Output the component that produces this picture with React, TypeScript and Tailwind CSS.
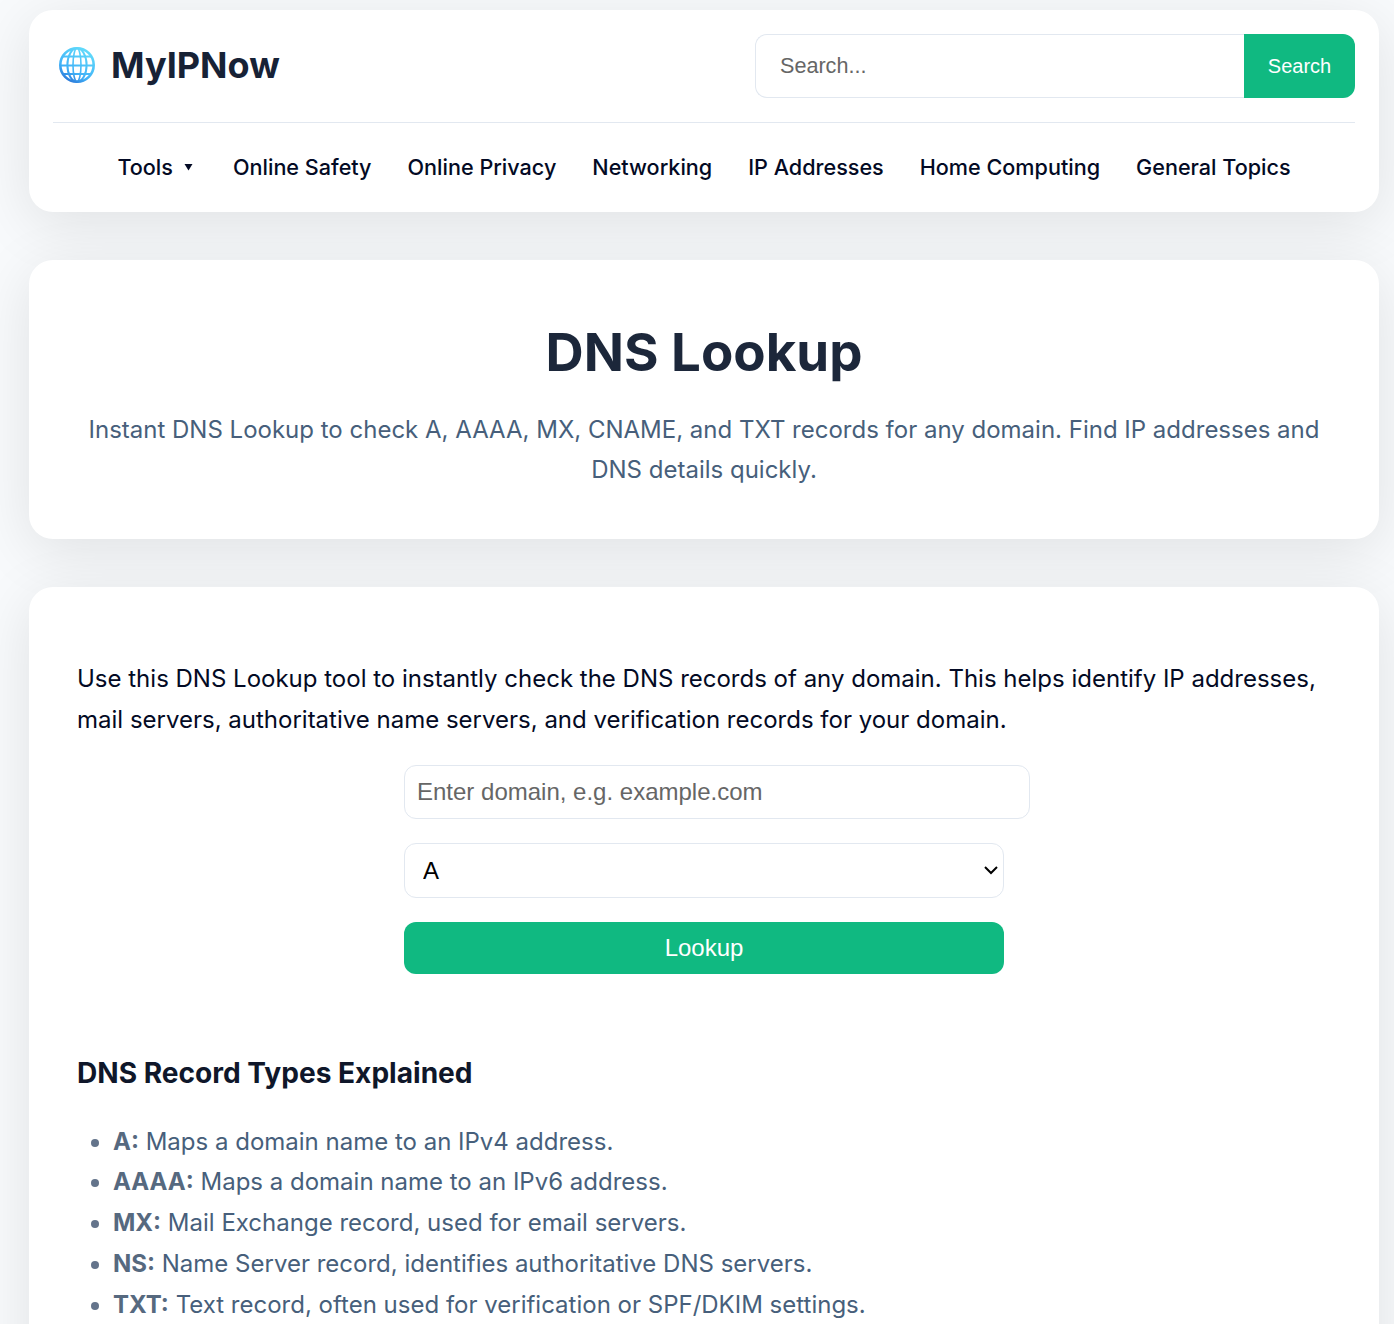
import { useState } from 'react';

const navItems = [
  'Online Safety',
  'Online Privacy',
  'Networking',
  'IP Addresses',
  'Home Computing',
  'General Topics',
];

const recordTypes = [
  { name: 'A', text: 'Maps a domain name to an IPv4 address.' },
  { name: 'AAAA', text: 'Maps a domain name to an IPv6 address.' },
  { name: 'MX', text: 'Mail Exchange record, used for email servers.' },
  { name: 'NS', text: 'Name Server record, identifies authoritative DNS servers.' },
  { name: 'TXT', text: 'Text record, often used for verification or SPF/DKIM settings.' },
];

function GlobeIcon() {
  return (
    <svg className="w-9 h-9" viewBox="0 0 36 36" fill="none">
      <defs>
        <linearGradient id="globe" x1="26" y1="1" x2="7" y2="34" gradientUnits="userSpaceOnUse">
          <stop stopColor="#62dcfb" />
          <stop offset="0.7" stopColor="#3fb0f7" />
          <stop offset="1" stopColor="#2a74d6" />
        </linearGradient>
      </defs>
      <g stroke="url(#globe)" strokeWidth="2">
        <circle cx="18" cy="18" r="16.7" strokeWidth="2.6" />
        <ellipse cx="18" cy="18" rx="9.6" ry="16.7" />
        <ellipse cx="18" cy="18" rx="4" ry="16.7" strokeWidth="1.6" />
        <path d="M1 18.5L35 18.51M4 9.5L32 9.51M4 27L32 27.01" />
      </g>
    </svg>
  );
}

export default function App() {
  const [domain, setDomain] = useState('');
  const [type, setType] = useState('A');

  return (
    <div className="h-[1324px] overflow-hidden bg-[#f8fafc] pl-[29px] pr-[15px] pt-[10px] font-['Inter',sans-serif] text-2xl leading-[1.7] text-[#030a24]">
      {/* Header */}
      <header className="h-[202px] rounded-3xl bg-white px-6 pt-6 shadow-[0_12px_60px_rgba(0,0,0,0.1)]">
        <div className="flex h-[89px] items-start justify-between border-b border-[#e2e8f0]">
          <a href="#" className="flex h-[62px] items-center gap-4 pl-1.5 text-4xl font-bold text-[#172236]">
            <GlobeIcon />
            <span>MyIPNow</span>
          </a>
          <form className="flex h-16 w-[600px]" onSubmit={(e) => e.preventDefault()}>
            <input
              type="text"
              placeholder="Search..."
              className="min-w-0 flex-1 rounded-l-xl border border-r-0 border-[#e2e8f0] px-6 font-['Liberation_Sans',sans-serif] text-[21.6px] leading-none outline-none placeholder:text-[#666666]"
            />
            <button className="w-[111px] rounded-r-xl bg-[#10b981] font-['Liberation_Sans',sans-serif] text-[20px] leading-none text-white">
              Search
            </button>
          </form>
        </div>

        <nav className="flex h-[89px] items-center justify-center gap-9 text-[21.6px] font-medium">
          <a href="#" className="mr-1 flex items-center gap-[11px]">
            Tools
            <svg className="w-[9px] h-2" viewBox="0 0 9 8">
              <path d="M0.5 1H8.5L4.5 7.5Z" fill="currentColor" />
            </svg>
          </a>
          {navItems.map((item) => (
            <a key={item} href="#">{item}</a>
          ))}
        </nav>
      </header>

      {/* Page title */}
      <section className="mt-12 h-[279px] rounded-3xl bg-white px-12 pt-[47px] text-center shadow-[0_12px_60px_rgba(0,0,0,0.1)]">
        <h1 className="text-[52.8px] font-bold leading-[90px] text-[#1c273a]">DNS Lookup</h1>
        <p className="mt-[12.5px] text-[#475f7b]">
          Instant DNS Lookup to check A, AAAA, MX, CNAME, and TXT records for any domain. Find IP addresses and DNS
          details quickly.
        </p>
      </section>

      {/* Lookup tool */}
      <main className="mt-12 h-[900px] rounded-3xl bg-white px-12 pt-[72px] shadow-[0_12px_60px_rgba(0,0,0,0.1)]">
        <p>
          Use this DNS Lookup tool to instantly check the DNS records of any domain. This helps identify IP addresses,
          mail servers, authoritative name servers, and verification records for your domain.
        </p>
        <form
          className="mx-auto mt-6 flex w-[600px] flex-col gap-6 font-['Liberation_Sans',sans-serif] leading-none"
          onSubmit={(e) => e.preventDefault()}
        >
          <input
            type="text"
            value={domain}
            onChange={(e) => setDomain(e.target.value)}
            placeholder="Enter domain, e.g. example.com"
            className="h-[54px] w-[626px] rounded-xl border border-[#e2e8f0] px-3 outline-none placeholder:text-[#666666]"
          />
          <div className="grid">
            <select
              value={type}
              onChange={(e) => setType(e.target.value)}
              className="col-start-1 row-start-1 h-[55px] w-full appearance-none rounded-xl border border-[#e2e8f0] bg-white px-[18px] pt-0.5 text-black outline-none"
            >
              {['A', 'AAAA', 'MX', 'NS', 'TXT', 'CNAME'].map((t) => (
                <option key={t}>{t}</option>
              ))}
            </select>
            <svg
              className="pointer-events-none col-start-1 row-start-1 mr-[5px] h-4 w-4 self-center justify-self-end"
              viewBox="0 0 16 16"
              fill="none"
            >
              <path d="M2 5L8 11L14 5" stroke="#000" strokeWidth="2" />
            </svg>
          </div>
          <button className="h-[52px] rounded-xl bg-[#10b981] text-white">Lookup</button>
        </form>

        <h3 className="mt-[75px] text-[28.08px] font-bold leading-[48px] text-[#0f172a]">DNS Record Types Explained</h3>
        <ul className="mt-[25px] list-disc pl-9 text-[#475f7b] marker:text-[#64748b]">
          {recordTypes.map((record) => (
            <li key={record.name}>
              <strong className="text-[#56697f]">{record.name}:</strong> {record.text}
            </li>
          ))}
        </ul>
      </main>
    </div>
  );
}
